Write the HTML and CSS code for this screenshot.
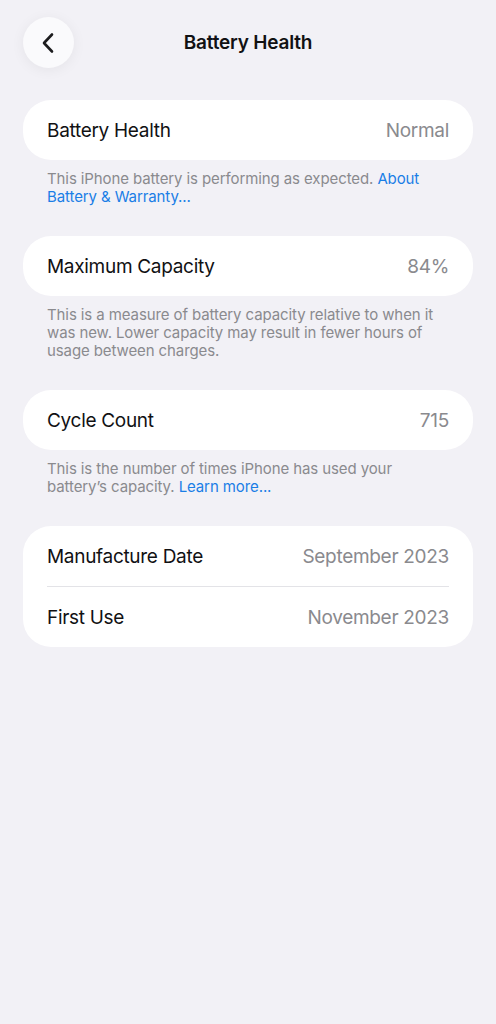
FILE: index.html
```html
<!DOCTYPE html>
<html lang="en">
<head>
<meta charset="utf-8">
<title>Battery Health</title>
<link rel="stylesheet" href="styles.css">
</head>
<body>
<header class="nav">
  <button class="back" aria-label="Back">
    <svg width="16" height="22" viewBox="0 0 16 22" fill="none">
      <path d="M12 2.5 L4 11 L12 19.5" stroke="#1c1c1e" stroke-width="2.6" stroke-linecap="round" stroke-linejoin="round"/>
    </svg>
  </button>
  <h1 class="title">Battery Health</h1>
  <span></span>
</header>
<main class="content">
  <section class="card">
    <div class="row"><span class="label">Battery Health</span><span class="value">Normal</span></div>
  </section>
  <p class="footer">This iPhone battery is performing as expected. <a class="link" href="#">About<br>Battery &amp; Warranty...</a></p>

  <section class="card">
    <div class="row"><span class="label">Maximum Capacity</span><span class="value">84%</span></div>
  </section>
  <p class="footer">This is a measure of battery capacity relative to when it<br>was new. Lower capacity may result in fewer hours of<br>usage between charges.</p>

  <section class="card">
    <div class="row"><span class="label">Cycle Count</span><span class="value">715</span></div>
  </section>
  <p class="footer">This is the number of times iPhone has used your<br>battery’s capacity. <a class="link" href="#">Learn more...</a></p>

  <section class="card">
    <div class="row"><span class="label">Manufacture Date</span><span class="value">September 2023</span></div>
    <div class="divider"></div>
    <div class="row"><span class="label">First Use</span><span class="value">November 2023</span></div>
  </section>
</main>
</body>
</html>
```
FILE: styles.css
```css
* { box-sizing: border-box; }
html, body { margin: 0; padding: 0; }
body {
  background: #f2f1f6;
  font-family: Inter, "Noto Sans", "Liberation Sans", sans-serif;
  color: #111113;
  width: 496px;
  min-height: 1024px;
}
.nav {
  display: grid;
  grid-template-columns: 1fr auto 1fr;
  align-items: center;
  padding: 17px 23px 0;
  height: 68px;
}
.back {
  width: 51px;
  height: 51px;
  border-radius: 50%;
  border: none;
  background: #fafafc;
  box-shadow: 0 2px 14px rgba(0,0,0,0.06);
  display: flex;
  align-items: center;
  justify-content: center;
  padding: 0 2px 0 0;
  margin: 0;
}
.title {
  margin: 0;
  font-size: 19px;
  font-weight: 600;
  letter-spacing: -0.2px;
  color: #111113;
}
.content {
  padding: 32px 23px 0;
}
.card {
  background: #ffffff;
  border-radius: 28px;
  padding: 0 24px;
}
.row {
  height: 60px;
  display: flex;
  align-items: center;
  justify-content: space-between;
  font-size: 19px;
  letter-spacing: -0.3px;
}
.label { color: #111113; }
.value { color: #8a8a8e; }
.divider {
  height: 1px;
  background: #e3e3e7;
}
.footer {
  margin: 0 0 30px;
  padding: 10px 24px 0;
  font-size: 15px;
  line-height: 18px;
  color: #8a8a8e;
  letter-spacing: -0.1px;
}
.link {
  color: #1a7ee6;
  text-decoration: none;
}
```
